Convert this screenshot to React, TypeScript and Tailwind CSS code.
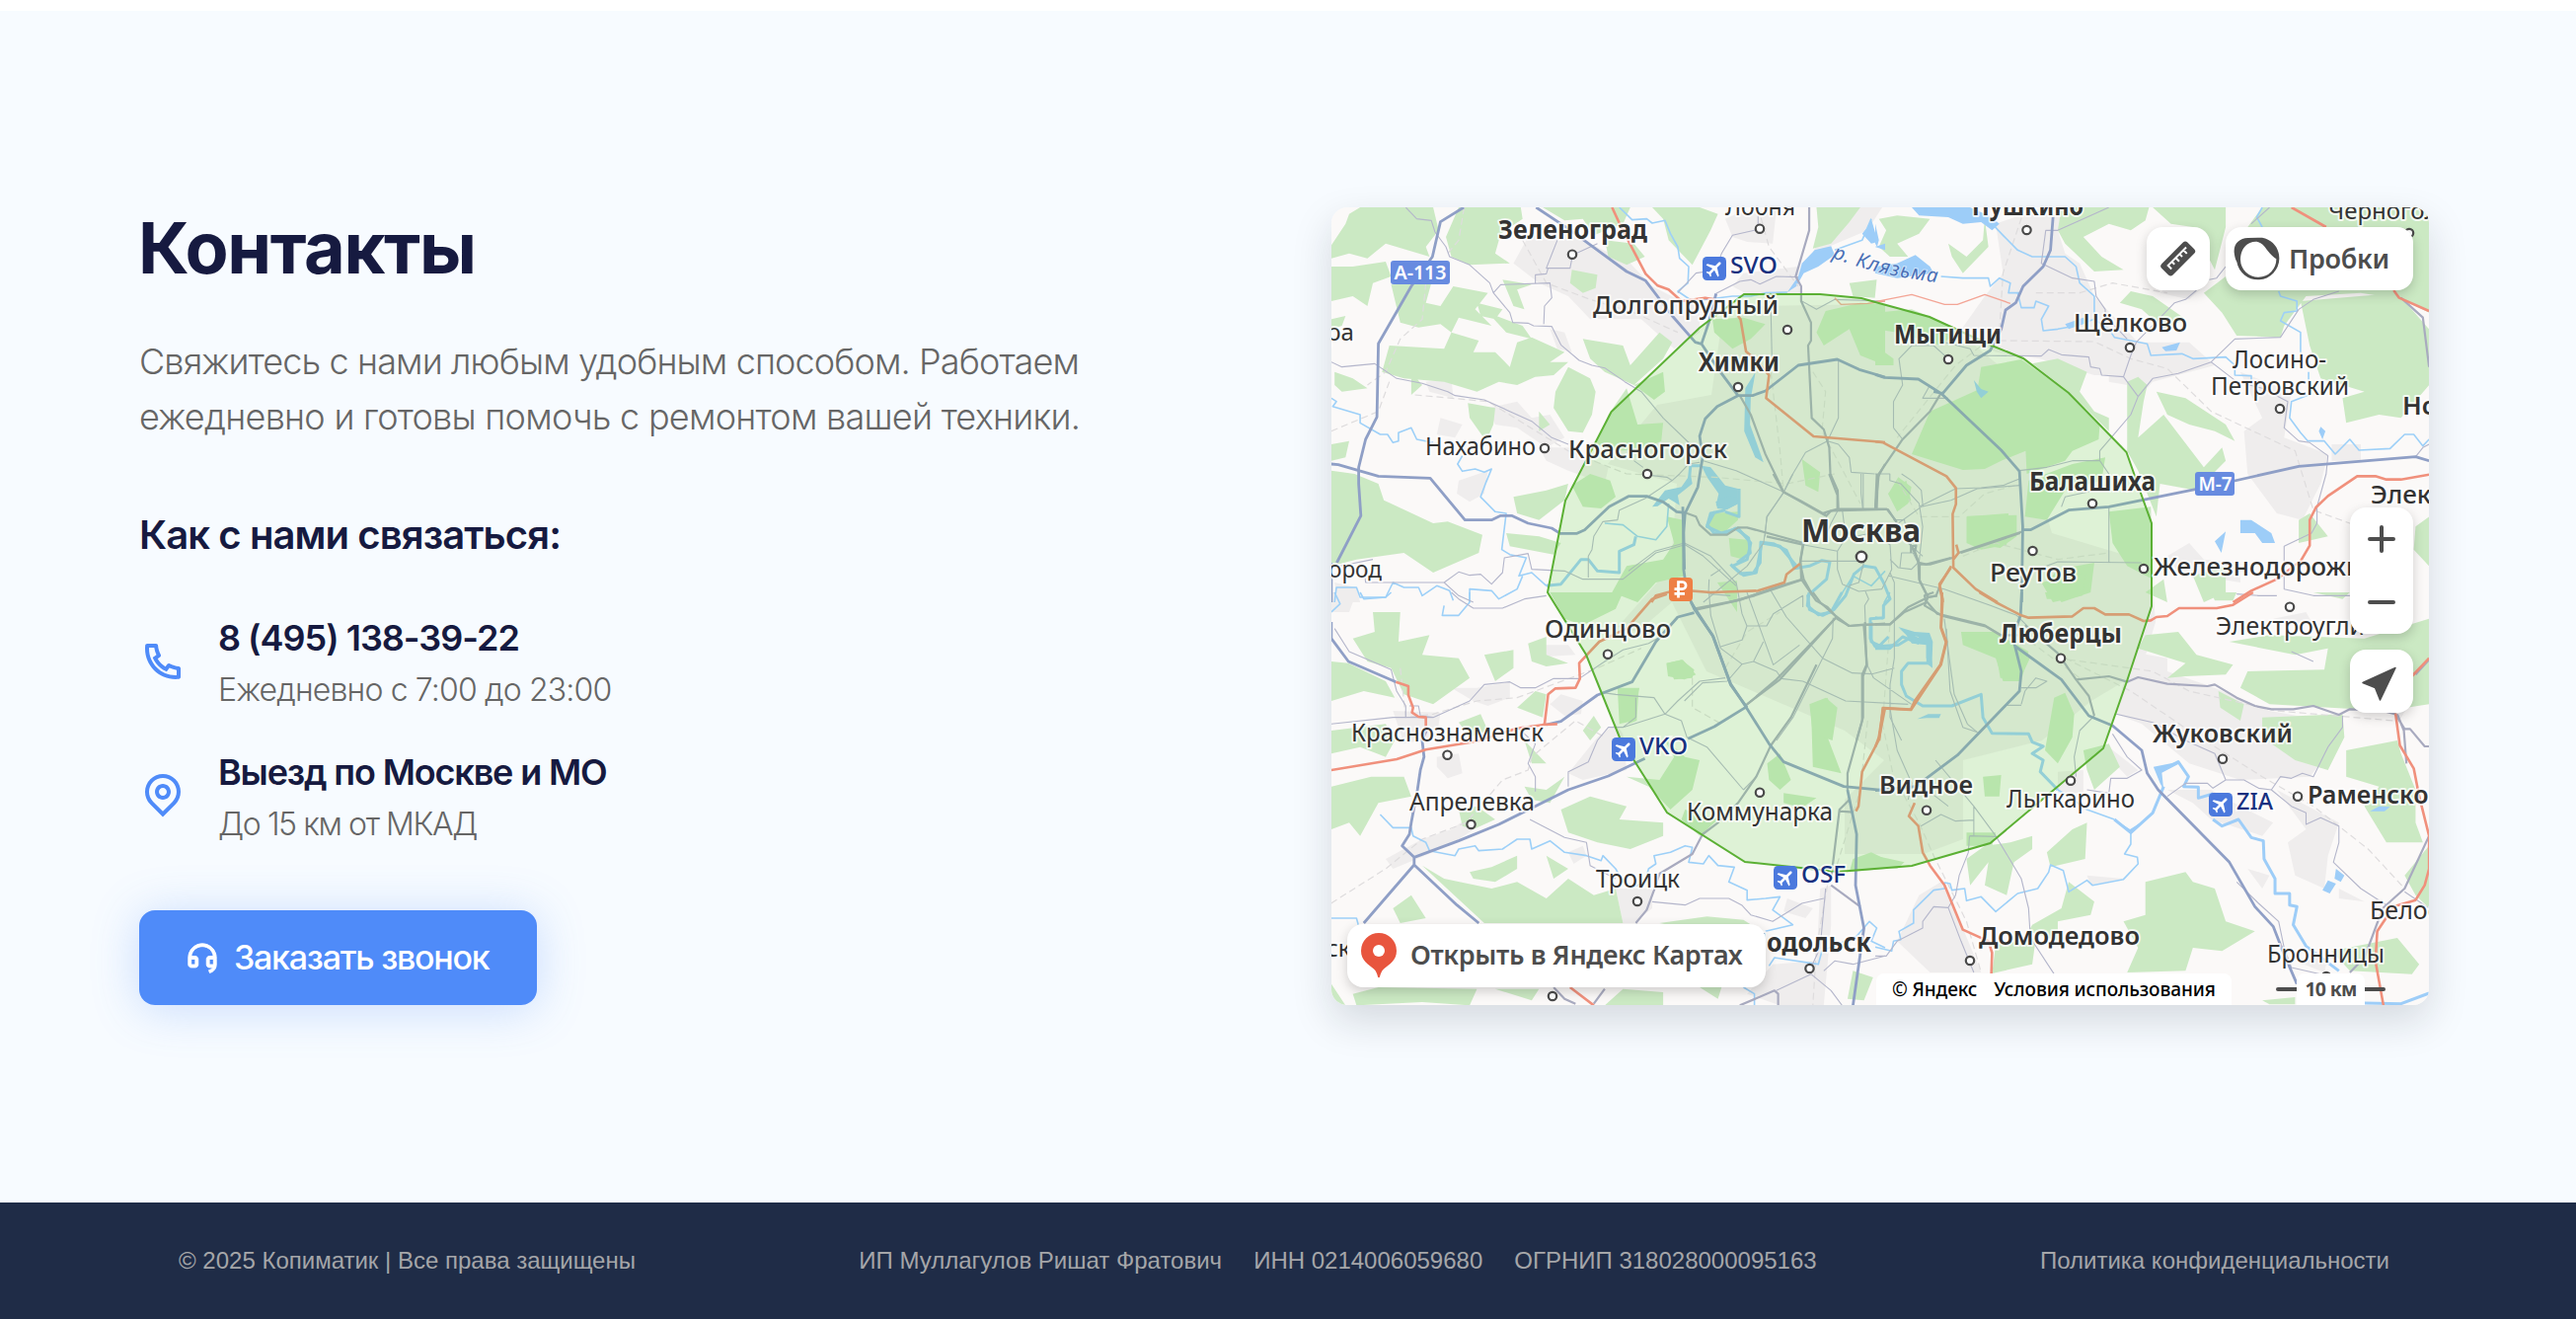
import type { ReactNode } from 'react';
import { RiCustomerServiceLine, RiMapPinLine, RiPhoneLine } from 'react-icons/ri';

type LayerName =
  | 'urban'
  | 'forest'
  | 'water'
  | 'rail'
  | 'stream'
  | 'river'
  | 'minor'
  | 'medium'
  | 'redThin'
  | 'blue'
  | 'red';

type Tile = { transform: string } & Partial<Record<LayerName, string[]>>;

const LAYERS: { name: LayerName; fill: string; stroke: string; width: number; dash?: string }[] = [
  { name: 'urban', fill: '#efeded', stroke: 'none', width: 0 },
  { name: 'forest', fill: '#cbe9c3', stroke: 'none', width: 0 },
  { name: 'water', fill: '#9dcdf8', stroke: 'none', width: 0 },
  { name: 'rail', fill: 'none', stroke: '#dedcdd', width: 1.2, dash: '7 4' },
  { name: 'stream', fill: 'none', stroke: '#9dd0f8', width: 1.6 },
  { name: 'river', fill: 'none', stroke: '#9dcdf8', width: 3 },
  { name: 'minor', fill: 'none', stroke: '#b4b6cb', width: 1.1 },
  { name: 'medium', fill: 'none', stroke: '#a8aabf', width: 2.2 },
  { name: 'redThin', fill: 'none', stroke: '#f3a596', width: 1.4 },
  { name: 'blue', fill: 'none', stroke: '#8f9fc6', width: 2.8 },
  { name: 'red', fill: 'none', stroke: '#f0907c', width: 2.6 },
];

const TILES: Tile[] = [
  {
    transform: 'translate(-19 -20) scale(0.3699 0.33333)',
    urban: [
      '590,150 680,130 760,170 870,230 930,300 1010,345 1060,360 1060,440 990,490 900,400 760,400 700,330 620,290 550,230',
      '1130,95 1160,80 1270,70 1260,170 1190,165 1150,150',
      '1150,300 1180,260 1330,240 1335,320 1200,330',
      '310,590 380,580 385,640 320,620',
      '350,700 410,720 390,760 340,750',
      '480,670 560,650 600,700 650,690 690,760 640,790 560,730 500,720',
      '400,890 480,860 470,930 430,955 395,930',
      '1370,200 1520,130 1560,60 1490,60 1400,120',
      '620,790 700,790 810,850 800,900 700,860 640,830',
      '60,1200 120,1215 130,1260 70,1260',
      '650,430 690,440 710,500 670,490',
    ],
    forest: [
      '130,60 330,60 345,130 310,180 320,210 200,170 150,215 100,200 51,215 51,175 90,110 100,80',
      '400,60 570,60 575,95 515,140 500,200 540,230 430,235 380,210 365,150',
      '51,240 110,240 200,225 215,270 165,290 150,360 110,330 51,345',
      '215,295 325,290 310,350 350,360 385,300 480,320 445,370 490,420 400,395 380,440 350,415 290,425 240,410',
      '210,480 360,490 380,440 455,465 440,500 500,500 540,545 560,470 600,455 690,500 650,530 620,570 560,600 510,590 450,620 360,590 250,580 190,560',
      '630,60 870,60 850,110 770,145 740,95 690,100',
      '800,160 880,170 910,210 860,235 810,210',
      '710,250 780,265 775,305 740,320 705,290',
      '700,545 760,580 775,620 765,690 740,745 700,740 660,670 665,620',
      '425,655 500,670 495,720 475,770 430,700',
      '51,860 115,870 180,900 195,950 330,1020 370,1015 465,1055 455,1110 330,1170 250,1110 120,1130 51,1150',
      '550,940 640,920 700,900 690,950 620,1010 560,990',
      '530,1050 620,1060 680,1080 660,1115 540,1090',
      '740,460 850,480 870,540 950,440 985,470 960,520 880,600 800,560 760,520',
      '880,600 960,560 965,620 935,645',
      '810,690 860,610 890,720 960,715 955,770 900,795 830,800 775,780',
      '710,905 760,870 815,890 830,940 790,975 740,970',
      '930,60 1060,60 1110,80 1090,130 1040,235 975,160 960,95',
      '1380,60 1500,60 1470,105 1420,170 1370,185 1385,120',
      '1095,400 1180,395 1240,415 1200,460 1150,490 1100,440',
      '1405,375 1500,350 1568,355 1568,540 1500,510 1470,430 1400,480 1380,440',
      '1090,990 1165,985 1165,1010 1130,1045 1085,1040',
      '1140,1065 1190,1070 1200,1100 1180,1130 1145,1120',
      '1340,825 1390,865 1385,925 1350,905',
      '860,1150 960,1130 990,1080 970,1000 1015,1010 1020,1180 940,1200 890,1260 820,1230',
      '1470,290 1545,280 1540,335 1480,330',
      '60,560 110,580 150,610 80,620 60,600',
      '480,380 575,420 600,460 530,440',
      '520,280 600,295 560,310 580,370 550,360',
      '51,780 100,770 90,820 51,830',
      '270,560 300,600 270,630',
      '620,680 650,720 620,740',
      '450,350 520,370 500,400 460,390',
      '600,530 700,530 660,570 610,575',
      '51,400 90,390 80,420 51,430',
    ],
    water: [
      '1340,230 1375,190 1420,178 1430,205 1385,240 1345,260 1325,300 1300,318 1330,270',
      '1505,140 1520,120 1530,95 1548,165 1530,170',
      '1185,610 1213,560 1200,640 1198,720 1235,835 1212,820 1182,740',
      '1065,845 1090,850 1130,905 1165,915 1165,960 1130,980 1105,965 1112,930 1080,880',
      '930,970 965,920 1010,910 1035,870 1040,900 1000,935 1005,965 975,945 945,968',
      '1540,180 1568,170 1568,190',
    ],
    rail: [
      '575,160 640,290 760,340 880,380 1000,440',
      '415,60 400,160 370,200',
      '310,290 300,400 240,460 200,560 150,600',
      '1220,60 1250,180 1330,300',
      '51,740 180,680 210,590',
      '280,630 480,650 700,800 860,870 1100,880 1300,900 1430,870',
      '1255,560 1280,800 1290,925',
      '1370,560 1405,620 1395,740 1500,960',
    ],
    stream: [
      '840,60 875,98 915,95 930,108 965,100 980,140 1000,180 1005,215 1030,240 1028,290 1000,315 1040,345',
      '51,640 65,650 55,665 130,690 130,715 185,750 205,750 220,775 235,770 235,745 270,730 285,765 330,775',
      '410,815 397,840 410,862 445,855 470,865 490,855 475,895 460,940 500,985 530,990 518,1100 540,1115 585,1125 565,1180 600,1170 640,1210',
      '60,1260 65,1215 120,1215 130,1245 200,1245 220,1200 250,1215 290,1215 300,1240 340,1210 375,1225 385,1255',
      '430,1260 430,1220 490,1225 510,1250 560,1220 575,1180',
      '800,1020 850,1025 890,1060 940,1070 970,1030 975,960',
      '1430,190 1505,160 1530,95',
      '1300,318 1240,320 1200,330 1150,330 1040,345',
      '1568,1165 1530,1210 1480,1180 1440,1250',
    ],
    river: [
      '640,1210 680,1205 735,1130 755,1130 780,1165 840,1170 840,1105 880,1085 885,1060',
      '1130,980 1090,990 1080,1030 1120,1050 1165,1035 1200,1080 1190,1130 1150,1150 1180,1178 1215,1170 1230,1080 1280,1090 1325,1150',
      '1168,915 1168,1000 1130,985',
      '1065,845 1035,845 1030,900',
    ],
    minor: [
      '255,60 285,95 325,100 335,135 365,180 375,210 430,235 485,290 495,320 540,380 548,410 590,412 605,420 655,422 680,478 730,525 765,540 800,548 855,590 900,620 960,700 1035,780',
      '51,530 80,545 170,535 230,580 300,595 370,620 390,632 470,645 540,680 600,710 655,760 700,780',
      '495,320 515,295 650,290 655,335 635,360 633,415',
      '670,160 640,245 705,245 712,205 780,170',
      '610,290 610,265 640,262 645,245',
      '1220,60 1220,110 1210,130 1150,145 1120,200 1105,250 1050,260 1000,320',
      '1105,322 1170,285 1200,280 1225,293 1270,270 1330,272',
      '140,1150 145,1200 360,1200 400,1168 430,1178 460,1175 490,1205 520,1170 525,1125 590,1112 600,1160 690,1165 740,1190 850,1190 940,1110 1020,1085 1070,1120 1160,1210',
      '51,1155 165,1130',
      '360,1200 400,1240 440,1260',
      '1070,830 1160,860 1290,925',
      '880,830 905,850',
      '930,875 970,880 985,890 1005,870 1030,840 1060,835',
      '985,890 910,945 840,980 835,1010 795,1015 770,1060 765,1100 755,1120 755,1185',
      '1440,520 1440,700 1410,770 1350,805 1310,880 1290,925',
      '1255,370 1258,520 1250,570',
      '1440,978 1420,1020 1400,1070',
      '1475,865 1540,870',
      '1475,865 1470,820 1440,780 1410,770',
      '1508,870 1508,978',
      '1340,345 1380,370 1430,340 1568,345',
      '1290,925 1245,1000 1235,1080 1190,1150 1070,1260',
    ],
    medium: [
      '1360,60 1360,130 1323,270 1338,300 1338,345 1365,410 1365,465 1357,480 1367,700 1400,735 1415,790 1418,870 1438,920 1440,978',
      '1170,632 1200,690 1240,810 1290,925 1405,997',
      '1405,1000 1420,982 1568,978',
      '1020,988 1050,1000 1060,1025 1090,1055 1135,1055 1165,1033 1190,1033 1345,1080',
      '1568,840 1548,880 1545,978',
      '1345,1080 1335,1140 1345,1190 1370,1240',
      '1345,1190 1210,1240 1140,1260',
    ],
    redThin: ['1430,335 1447,355 1520,352 1568,345'],
    blue: [
      '414,60 350,104 328,210 270,300 180,474 176,697 145,765 126,850 126,900 132,997 66,1140',
      '51,840 70,842 180,877 322,883 417,1010 490,1010 515,997 545,997 590,1020 655,1035 678,1051 724,1051 745,1040 812,970 865,938 915,938 960,955 997,985 1020,988',
      '612,60 700,125 860,255 912,283 985,390 1048,470 1065,475 1110,550 1165,632',
      '1165,632 1108,665 1075,703 1060,755 1068,820 1055,910 1020,990 1016,1050 1016,1160 1020,1190',
      '1165,632 1205,632 1240,618 1330,540 1437,522 1497,553 1568,576',
      '1065,475 1085,410 1105,322',
      '51,1140 51,1260',
    ],
    red: [
      '820,60 845,120 912,262 945,298 975,310 1010,345 1075,335 1100,340',
      '1165,390 1172,400 1187,498 1210,520 1250,570 1242,640 1372,756 1568,774',
      '928,1260 940,1240 1000,1222 1090,1230 1220,1225 1292,1200 1298,1175 1335,1143',
    ],
  },
  {
    transform: 'translate(551 -20) scale(0.3699 0.33333)',
    urban: [
      '330,110 460,60 640,60 500,130 520,200 560,230 600,330 720,470 860,470 930,540 760,590 720,640 680,570 600,570 450,520 330,500 230,440 300,330 350,260',
      '1000,560 1140,620 1120,760 1240,810 1220,900 1170,1010 1100,990 1020,870 1010,740 1060,700',
      '860,230 900,300 860,340 780,320',
      '1380,60 1450,110 1500,140 1460,170',
      '640,520 700,560 690,600 640,590',
      '800,1120 860,1080 900,1130 1000,1140 1000,1200 830,1170',
      '1250,780 1330,780 1330,830 1250,830',
    ],
    forest: [
      '510,60 750,60 740,100 700,130 640,110 570,150 620,210 680,250 600,255 520,170 500,130',
      '10,95 60,85 150,95 120,140 60,170 90,210 40,210 10,180 30,130',
      '200,170 250,210 295,160 300,95 310,180 240,260 210,210',
      '760,60 960,60 960,120 930,250 870,120 810,110',
      '1060,60 1517,60 1517,380 1440,340 1330,320 1180,330 1120,420 1110,455 990,450 950,380 900,320 960,270 1000,150',
      '1165,345 1430,320 1517,430 1517,600 1440,700 1380,690 1290,715 1280,640 1340,620 1220,580 1190,480',
      '290,545 400,522 530,625 615,720 612,765 540,800 520,830 415,870 412,800 345,830 300,855 240,858 100,810 150,680 280,615',
      '430,535 500,520 580,560 560,620 600,680 640,700 640,740 530,620',
      '0,380 100,370 230,430 180,480 60,440 0,430',
      '0,480 50,520 50,540 0,540',
      '690,590 720,575 745,600 735,650 720,760 790,690 900,850 950,790 960,830 880,920 780,900 770,1000 720,860 690,800',
      '770,620 850,640 960,720 985,770 930,740 860,720 800,690',
      '640,985 755,970 760,1190 690,1150 650,1080',
      '250,1000 365,990 360,1085 290,1100 250,1080',
      '410,1000 420,890 540,840 630,820 620,890 520,920 470,1010',
      '500,1160 600,1140 590,1230 510,1260 470,1200',
      '35,930 85,890 98,950 60,985',
      '1480,1030 1517,1000 1517,1150 1475,1100',
      '1160,1010 1190,990 1240,1060 1160,1080',
      '670,350 700,315 760,330 850,400 790,430 730,370',
      '870,1180 960,1150 960,1230 900,1260',
      '740,1230 790,1190 800,1260',
    ],
    water: [
      '100,60 260,60 320,90 340,110 320,130 290,105 240,110 200,90 120,85',
      '0,240 60,230 110,205 150,240 160,260 60,275 0,260',
      '785,485 835,470 825,495 795,497',
      '1000,1010 1030,1010 1085,1050 1095,1080 1060,1080 1040,1050 1000,1050',
      '930,1075 960,1045 948,1110',
      '1215,740 1220,727 1233,740 1225,765',
      '270,585 290,612 310,620 290,640 278,620',
      '0,110 10,160 5,180 0,170',
      '520,415 570,395 580,410 530,430',
    ],
    rail: [
      '410,60 350,260 340,440 220,540 60,760',
      '340,465 600,468 700,520 800,550 920,680 1150,800 1200,980 1400,1060',
      '440,320 560,320 650,290 800,320',
      '240,1120 330,1080 500,1130 640,1110',
      '60,890 120,1000 230,1000 300,930 400,900',
    ],
    stream: [
      '320,110 350,145 390,190 430,210 520,210 550,240 560,290 600,330 600,400 550,420 500,430 460,435 455,400 475,360 440,345 435,365 400,365 390,320 370,320',
      '180,270 240,275 310,275 315,300 340,275 370,290 365,320 400,320',
      '600,400 640,430 655,455 745,475 755,510 840,505 870,520 960,515 985,540 985,570 1030,572 1030,600',
      '1165,500 1165,440 1110,405 1120,380 1155,375 1155,345 1110,330 1105,315',
      '1187,560 1187,630 1140,650 1135,700 1165,745 1185,770 1230,770 1260,810 1300,765 1325,798 1410,793 1450,750 1475,750 1500,785 1517,765',
      '1060,60 1045,90 1060,120',
    ],
    minor: [
      '270,510 455,512 475,492 510,508 585,515 590,545 615,550 620,570 680,575 700,510 715,470',
      '680,575 720,635 700,690 650,755 615,800 615,830',
      '720,635 760,580 830,565 920,530 985,460 1110,455 1160,370 1200,340 1270,315',
      '920,530 990,590 1060,610 1130,650 1120,730 1160,770 1190,775 1240,815 1235,870 1210,970 1210,1020 1195,1050 1120,1090 1120,1220 1200,1240 1300,1240',
      '640,60 580,90 500,130 467,130 455,230 540,275 600,285 605,330 630,370 630,390 690,460',
      '880,312 850,340 820,350 750,430 715,470',
      '420,1170 500,1137 730,1140',
      '50,730 50,650 75,600 65,520 100,480 160,480 200,520',
      '50,730 75,765',
      '640,1140 640,970',
      '120,970 220,915 290,912 350,905 395,885',
      '395,860 470,850 540,830 615,830 640,870 640,890',
      '510,970 520,940 600,920',
      '1480,818 1500,790 1517,780',
      '915,280 935,275 960,240',
      '1080,60 1040,100 1030,110',
      '200,640 130,640 150,600',
      '0,870 40,870 40,890 70,900 120,960 130,1030 120,1140',
      '50,1010 80,1010 90,1080 130,1120',
      '270,510 260,490 190,470',
    ],
    medium: [
      '180,625 150,680 75,765 10,870 0,975',
      '228,1110 404,1045',
      '120,1145 150,1145 212,1125',
      '0,978 35,978 60,1020',
      '100,1090 110,1110 118,1140 120,1190 145,1245 170,1240',
      '98,1110 98,1090 112,1088 108,1112',
      '1440,335 1500,395 1517,545',
    ],
    redThin: ['0,347 100,325 190,355 225,355 300,325 370,352'],
    blue: [
      '487,90 480,190 460,240 405,300 385,350 357,372 345,430 315,495 250,540 185,625',
      '160,620 185,625',
      '0,568 25,577 118,582 180,625 345,798 395,862 404,1030 401,1260',
      '404,1040 425,1040 530,980 640,970 900,912 1160,847 1480,818 1517,830',
    ],
    red: [
      '1140,60 1235,120',
      '1420,312 1435,335 1517,375',
      '1517,872 1440,887 1400,887 1370,877 1320,877 1240,937 1207,972 1190,1010 1190,1088 1165,1135 1100,1190 1030,1225 980,1260',
      '0,772 22,775 195,877 221,913 221,962 212,992 214,1155 275,1220 335,1260',
      '222,1085 228,1110 214,1130',
      '208,1150 176,1210 185,1260',
    ],
  },
  {
    transform: 'translate(-19 390) scale(0.3699 0.33333)',
    urban: [
      '220,360 350,365 340,440 250,460',
      '300,750 380,720 430,680 470,700 400,750 330,790 220,840 200,810',
      '780,440 830,400 850,430 860,540 740,570 700,550',
      '380,290 450,290 540,270 540,320 480,345 440,330',
      '680,310 740,330 735,370 690,375 650,340',
      '630,160 700,160 720,190 640,195',
      '830,900 930,900 930,960 880,1005 850,1005',
      '1390,900 1420,890 1420,1010 1400,1255 1280,1255 1190,1220 1260,1130 1380,1120',
      '340,500 400,490 410,550 370,565 340,530',
      '1300,930 1370,960 1350,990 1290,970',
      '700,790 740,770 750,800 715,825',
      '51,0 120,0 100,60 51,60',
    ],
    forest: [
      '165,60 240,60 235,150 320,130 300,190 400,200 430,260 330,340 250,310 215,230 150,210 110,140 170,120',
      '51,210 98,215 200,270 225,320 140,300 51,330',
      '51,420 200,400 225,450 200,500 130,470 51,490',
      '51,590 160,560 250,560 270,620 180,640 130,740 100,700 51,720',
      '400,395 460,370 480,420 430,440',
      '470,190 550,175 550,230 500,270',
      '590,155 640,135 640,190 700,215 640,225 600,210',
      '610,300 640,310 630,380 560,350',
      '770,375 790,410 760,450 740,420',
      '680,660 760,620 860,650 840,690 960,700 960,740 870,780 780,760 700,730',
      '430,850 490,835 560,800 560,840 500,880 440,870',
      '490,900 560,880 640,930 700,870 770,920 830,900 850,1005 470,1005 300,830 360,870',
      '220,960 270,920 310,990 240,1005',
      '950,1005 1080,985 1180,995 1230,1030 1200,1060',
      '120,1255 110,1220 180,1200 450,1205 430,1255 300,1245',
      '500,1205 620,1205 600,1240',
      '800,1255 850,1205 960,1215 960,1255',
      '1060,1200 1120,1200 1110,1235',
      '860,560 950,570 990,500 960,440 1020,500 1060,510 1040,600 980,660 920,590',
      '1365,340 1410,320 1425,360 1400,410 1448,550 1370,530',
      '970,215 1010,205 1045,235 1040,260 990,265',
      '835,290 895,290 880,390 840,400',
      '1245,520 1280,490 1310,570 1280,600 1250,570',
      '1290,610 1380,625 1340,655 1290,640',
      '1480,810 1530,790 1568,810 1568,840 1470,850',
      '650,0 850,0 830,50 740,100 690,80',
      '1480,1150 1535,1170 1510,1240 1465,1235',
      '51,1190 90,1255 51,1255',
      '400,660 450,650 500,690 440,720 410,710',
      '1020,660 1110,690 1060,740 1010,690',
      '580,450 640,520 600,520',
      '580,590 640,600 690,560 650,640 600,630',
      '640,800 700,840 660,870',
    ],
    rail: [
      '240,230 255,380 330,370 450,330 560,320 780,230 900,170',
      '0,980 200,840 300,750 420,700 520,570 590,540 600,500 720,390 800,440',
      '1410,890 1380,1080 1370,1255',
      '1040,260 1040,350 1120,400',
      '1520,390 1500,600 1430,850',
      '1130,230 1190,120 1280,60',
    ],
    stream: [
      '185,675 220,715 270,715 275,740 310,760 320,785 390,800 400,780 445,770 455,785 520,780 560,750 595,750 600,780 650,755 690,790 750,800 790,815 795,800 830,840 850,880',
      '870,900 910,880 920,840 940,825 935,800 980,790 1020,770 1040,775 1030,820 1070,825 1085,800 1110,830 1155,835 1140,880 1190,905 1190,935 1240,930 1280,925 1260,965 1315,1010 1240,1030',
      '1250,1135 1265,1110 1385,1130 1395,1090 1490,1045 1525,1000 1545,1020 1530,1060 1568,1080',
      '51,990 120,990 125,1010',
      '51,60 75,35 60,0',
      '360,40 355,70 400,70 430,30 430,0',
      '130,0 140,20 200,15 215,0',
      '1180,1200 1210,1220 1210,1255',
    ],
    river: [
      '1360,0 1355,40 1385,68 1420,60 1450,0',
      '1530,90 1530,150 1568,170',
    ],
    minor: [
      '60,110 100,180 215,235 230,300 255,345 255,380',
      '51,400 220,380 330,380 430,330 470,280 540,272 570,290 610,290 660,262 730,262 800,210 850,175 920,155 960,130',
      '265,345 290,345 295,375 330,380',
      '380,0 400,20 440,48 520,48 580,20 640,10',
      '795,305 830,310 935,320 965,370 1010,390 1025,440 1080,470 1180,600',
      '885,320 885,380 850,410 810,410 780,450 755,515 700,545 700,590',
      '850,410 880,400 965,370 1000,330 1060,270 1130,260',
      '560,410 610,460 590,520 610,560 610,605',
      '595,690 690,745 750,760 760,830 830,870',
      '930,940 1020,950 1060,930 1140,930 1175,950 1200,980 1260,1000 1340,945 1400,930',
      '1405,900 1390,1080 1365,1140',
      '1270,1210 1365,1160 1420,1210 1450,1255',
      '1400,1150 1430,1120 1480,1130 1568,1105',
      '1180,600 1215,560',
    ],
    medium: [
      '885,1005 915,965 935,905 950,855 1040,795 1068,735 1110,700 1165,640 1215,560 1255,465',
      '1255,465 1310,380 1380,220',
      '1185,345 1270,265 1435,75',
      '1435,80 1470,102 1568,95',
      '1513,90 1517,220 1505,250 1505,390 1465,550 1465,600',
      '1470,630 1443,660 1420,870',
      '1443,665 1480,668',
      '1420,890 1500,955',
      '1170,1255 1265,1210 1275,1220 1275,1255',
      '660,1200 690,1235 720,1250',
      '770,1250 800,1205',
      '1045,50 1160,25 1230,0',
      '1370,0 1390,30 1435,75',
    ],
    blue: [
      '51,90 51,140 98,210 228,272',
      '315,410 300,450 305,500 295,540 287,600 270,700 265,735 245,770 278,805 278,828 140,1005',
      '278,805 400,755 510,705 700,600 810,558 910,505',
      '1028,445 1100,408 1185,350',
      '278,828 395,950 455,1005',
      '640,402 680,392 780,312 875,272 940,150 1000,75 1045,62',
      '1025,0 1045,50 1095,130 1145,278 1185,345 1250,460 1290,515 1455,590 1568,602',
      '1465,600 1490,735 1487,890 1510,1020 1480,1255',
    ],
    red: [
      '228,272 262,285 262,312 275,350 272,365 290,378 310,380 310,410',
      '51,540 230,507 310,478 450,452 560,413 635,402 645,310 665,292 720,290 732,262 730,215 785,150 860,110 930,20 970,5',
      '630,402 670,400',
      '705,1200 770,1255',
      '1568,350 1550,450 1505,545 1500,600 1495,650 1488,665',
    ],
  },
  {
    transform: 'translate(551 390) scale(0.3699 0.33333)',
    urban: [
      '700,180 800,200 800,240 930,290 1080,360 1280,400 1280,440 1190,560 1000,570 860,520 730,400 660,370',
      '1100,600 1270,700 1240,800 1230,900 1150,860 1130,760 1180,720',
      '120,920 180,880 240,1020 290,1155 150,1155 60,1060',
      '800,600 920,600 1000,650 1090,700 1060,740 920,690 870,640',
      '1270,900 1340,940 1270,930',
      '500,545 570,540 570,610 500,610',
      '640,470 720,540 690,560 640,500',
      '580,860 680,870 590,890',
      '1470,130 1517,90 1517,240 1430,400',
      '1150,1120 1240,1110 1230,1155',
      '1090,80 1180,60 1200,100',
      '1020,840 1080,860 1060,900',
    ],
    forest: [
      '235,120 305,120 375,150 420,180 400,270 350,270 330,200 240,160',
      '740,130 830,120 880,190 980,220 960,250 850,255 800,260 850,215 720,170',
      '970,150 1080,130 1340,140 1517,80 1517,340 1400,360 1080,340 1000,290 1020,240 1230,235 1240,170 1150,190',
      '1060,380 1280,370 1285,440 1240,540 1150,510 1060,440',
      '1290,480 1430,450 1440,490 1480,600 1480,700 1500,760 1400,760 1340,650 1380,590 1290,560',
      '490,320 520,305 545,370 540,440 500,520 465,480',
      '540,720 580,700 575,810 480,835 470,790',
      '250,810 300,770 370,760 430,740 430,780 380,820 360,920 300,890 310,820 260,890',
      '430,1010 510,960 530,880 600,940 590,980 500,1000 500,1060 420,1030',
      '680,1000 740,980 740,880 850,850 870,880 930,900 960,1000 1040,1030 950,1090 870,1080 850,1150 690,1155 720,1080',
      '330,1070 440,1050 430,1130 320,1158',
      '1250,1090 1430,1050 1490,1130 1470,1160 1300,1150',
      '570,480 640,460 670,530 600,600 580,540',
      '295,560 345,555 340,620 300,620',
      '465,0 550,0 530,20 470,20',
      '920,0 990,0 980,25 930,25',
      '940,300 1010,340 1000,390 945,350',
      '1060,1240 1150,1230 1150,1252 1080,1252',
      '0,800 80,820 60,840 0,835',
      '1450,860 1517,770 1517,960 1480,920',
      '250,730 330,730 320,770 250,770',
      '1200,0 1300,0 1280,20',
    ],
    water: [
      '65,108 100,130 150,150 157,230 140,215 140,160 100,155 85,130',
      '762,530 830,515 830,522 785,548 790,600 780,580',
      '1262,840 1285,860 1275,880 1258,870',
      '1225,905 1240,875 1262,885 1245,915',
      '1355,665 1380,650 1410,652 1395,665',
      '115,385 145,370 180,370 175,382 140,382',
      '655,690 698,720 740,690 700,735',
    ],
    rail: [
      '40,100 20,400 50,560 120,700 160,800 250,1000 290,1155',
      '520,200 700,300 860,420 1060,560 1200,650 1350,780 1450,900',
      '500,200 600,215 760,240 860,300 1100,360 1420,390',
      '400,130 560,260',
    ],
    stream: [
      '700,730 700,765 683,795 718,805 720,825 680,872 595,890 580,875 530,910 515,845 480,828 475,850 445,900 390,915 330,970 290,925 250,937 245,900 210,905 205,885 190,882 190,900 160,905 105,965 105,1005 65,1030 70,1055 50,1060 45,1090 0,1078',
      '500,600 530,620 580,660 655,690',
      '0,75 20,80 25,30 40,0',
    ],
    river: [
      '0,170 40,170 75,135 120,155',
      '155,215 90,215 72,240 72,280 85,315 130,345 210,345 290,310 295,380 320,428 420,430 430,455 460,468 430,490 460,510 452,545 500,600',
      '655,690 700,730 760,670 790,590',
      '785,540 830,515 858,560 845,590 885,592 885,625 925,612',
      '925,690 950,710 995,690 1030,745 1063,755 1065,810 1095,870 1095,915 1135,915 1135,950 1155,955 1145,1010 1180,1075 1270,1150',
      '1340,1248 1440,1250 1517,1218',
    ],
    minor: [
      '660,370 760,395 850,450 930,490 960,570',
      '800,620 850,580 910,580 925,595 960,570 1010,570 1050,595 1085,600 1140,650 1180,670 1180,705 1220,685 1270,710 1270,760 1255,820 1330,900 1400,950',
      '1085,600 1110,560 1140,565 1170,550 1200,560 1240,470 1280,410 1280,375',
      '650,430 690,500 730,540 690,565 645,565 640,610 580,600',
      '40,350 60,480 100,580 90,630',
      '165,510 270,650 270,740 260,740',
      '110,580 165,620 200,650',
      '270,650 330,740 400,870 420,960 425,1050 490,1160',
      '258,740 330,742',
      '125,710 180,675 220,695 270,692',
      '600,375 560,420 545,500 550,560',
      '0,1105 30,1105 60,1060 130,1020 130,1000 160,955 200,958',
      '258,742 255,790 230,860 220,920 200,958 235,1060 270,1155',
      '195,110 205,300 240,410 280,425',
      '990,880 1050,945 1105,1000 1120,1080 1140,1140 1220,1160',
      '400,340 410,300 440,260 470,270 440,290 400,290',
      '360,343 400,343',
      '1140,180 1200,210',
      '990,5 1050,10 1100,10',
      '1517,960 1450,910',
    ],
    medium: [
      '135,20 170,65 300,100 345,130 390,130',
      '410,100 500,185 550,265 640,255 690,272 720,258 800,278 910,285 930,280 990,320 1040,345 1085,355 1145,355 1200,345 1270,372 1300,355 1390,360 1425,370 1450,415 1465,415 1505,468 1517,468',
      '550,265 585,315 600,375',
      '1430,370 1448,420 1455,520',
      '1517,740 1450,900 1390,960 1340,1110 1300,1155',
      '0,97 40,97 80,60 140,30 135,10 160,0',
      '1480,250 1517,205',
    ],
    blue: [
      '401,0 398,70 382,120 382,160 400,240 395,300 225,495 140,565 110,590 0,602',
      '385,165 510,265 585,375 650,405 730,480 745,550 775,600 970,820 1040,955 1090,1015 1120,1100 1155,1190',
    ],
    red: [
      '285,0 330,30 400,70 420,77 540,73 570,48 600,48 630,67 695,67 735,87 755,85 770,75 800,72 832,48 935,48 980,38 1035,0',
      '1517,200 1470,255',
      '1425,368 1437,465 1475,535 1490,620 1517,740 1517,840 1505,890 1480,935 1420,955 1375,1030 1370,1120 1392,1255',
      '183,0 180,105 195,150 180,220 98,357 22,352 10,440 0,470',
      '108,640 92,680 118,710 130,790 150,830 190,890 240,1025 310,1060 320,1095 318,1160',
    ],
  },
  {
    transform: 'translate(301 270) scale(0.33333)',
    forest: [
      '1030,128 1180,125 1180,190 1130,225 1095,220 1060,230 1030,200',
      '790,60 820,10 860,40 850,90 820,112',
      '270,330 330,325 330,420',
      '1255,330 1390,300 1380,370 1290,390',
      '115,575 165,565 205,610 170,625 120,615',
      '1010,480 1120,480 1180,540 1220,560 1190,625 1130,620 1120,560',
      '550,700 600,680 635,710 620,810 560,790',
      '0,690 30,670 25,750 0,760',
    ],
    river: [
      '310,275 340,303 380,300 400,270 402,208 440,212 480,232 505,287 550,280 588,263 612,268 602,320 545,370 550,412 590,430 625,412 660,370 685,305 715,280 750,285 775,330 795,380 775,400 775,437 735,440 735,500 750,525 820,520 870,490',
      '262,115 240,155 260,180 300,180 325,165 365,195 370,240 330,270',
      '760,525 790,495',
    ],
    water: ['820,465 870,480 915,483 925,510 922,585 905,560 905,520 880,495 850,490', '265,85 300,68 330,70 335,90 300,108 270,105'],
    minor: [
      '0,295 80,235 170,210 250,250 328,333 345,425 360,462 420,462 440,425 530,370 530,405',
      '245,365 250,430 280,530 345,578 380,570 410,510',
      '247,365 310,370',
      '430,350 480,435 590,560 680,605 740,608 808,590',
      '280,525 345,505 360,462',
      '345,578 300,630 225,635 170,690',
      '530,630 660,690 850,700',
      '590,560 540,660 500,740 450,810',
      '530,630 465,622 450,600 380,570',
      '622,437 620,500 590,560',
      '707,0 707,60 712,107',
      '795,300 808,330 808,560 795,640 795,740 830,810',
      '790,310 960,350 1100,400 1180,430 1220,470',
      '745,620 860,700',
      '725,580 745,620',
      '960,440 975,560 990,670 1030,760 1060,785',
      '895,100 890,50 860,20 830,0',
      '820,150 890,100 980,80 1060,45 1190,35',
      '415,190 420,130 470,60 500,0',
      '250,310 280,290',
      '530,215 635,235',
      '520,265 700,265',
      '665,185 655,150 650,110',
      '635,235 660,195 740,180 795,215 800,290 770,350 700,357 650,335 635,290 635,235',
      '795,260 820,285 860,290 880,270 865,240 830,240 825,285',
      '720,357 730,380 718,400 720,450',
      '360,360 440,580 520,520',
      '245,320 243,365',
      '670,340 700,330 715,270',
    ],
    medium: [
      '590,120 605,115 635,107 785,107 815,145',
      '850,200 875,250 885,275 885,325 910,375 850,405 795,457 715,458 670,462 630,432 605,405 570,385 525,320 523,260 530,215',
      '530,215 420,190',
      '440,0 470,55 520,80 600,125',
      '610,0 635,65 635,107',
      '755,0 750,107',
      '1190,180 1010,240',
      '980,255 905,275 885,270',
      '715,458 725,580 713,615 713,740 693,810',
      '630,437 460,625 360,700',
      '205,413 340,383 430,350 530,320',
      '910,375 900,400 955,432 1085,463 1130,490',
      '910,375 935,370 945,345',
    ],
    blue: ['165,100 170,290', '190,390 258,495 310,640 360,710'],
    red: ['980,285 945,335 955,380 950,470 965,512 948,580 870,690 858,716 773,711 768,760 762,810'],
  },
];

/** Dense built-up area inside the ring road, in map coordinates. */
const CITY =
  '385,190 395,120 430,100 560,98 640,130 700,180 700,230 730,330 830,360 835,420 820,470 770,500 720,540 640,560 640,640 600,655 520,655 520,600 560,560 520,530 450,500 380,470 345,400 310,430 290,425 330,380 345,350 350,280 280,260 330,200';

const ZONE =
  '418,88 495,88 537,92 551,96 606,111 669,140 701,153 747,188 805.5,248 822,295 831,320 831,404 806,480 782,548 667.5,644 588,667 512.7,673 419,663 340,613 292,537 258,453 219,390 237,297 283.6,207 373,122';

type Label = { t: string; x: number; y: number; len?: number; w: 400 | 500 | 600 | 700; size?: number };

const LABELS: Label[] = [
  { t: 'Зеленоград', x: 169, y: 31.7, len: 151, w: 700 },
  { t: 'Лобня', x: 399, y: 7.7, len: 71, w: 400 },
  { t: 'Долгопрудный', x: 265, y: 107.7, len: 188, w: 500 },
  { t: 'ра', x: -5, y: 134.5, w: 400, size: 24 },
  { t: 'Химки', x: 372, y: 165.7, len: 82, w: 700 },
  { t: 'Нахабино', x: 95, y: 251, len: 112, w: 400, size: 25 },
  { t: 'Красногорск', x: 240, y: 254, len: 161, w: 500 },
  { t: 'Москва', x: 476, y: 338.5, len: 121, w: 700, size: 32.5 },
  { t: 'ород', x: -3, y: 375, len: 54, w: 400, size: 24 },
  { t: 'Пушкино', x: 649, y: 7.7, len: 113, w: 700 },
  { t: 'Черноголовка', x: 1010, y: 12, w: 400, size: 24 },
  { t: 'Мытищи', x: 570, y: 137.7, len: 109, w: 700 },
  { t: 'Щёлково', x: 752, y: 125.7, len: 115, w: 500 },
  { t: 'Лосино-', x: 913, y: 162.7, len: 95, w: 400, size: 25 },
  { t: 'Петровский', x: 891, y: 190, len: 140, w: 400, size: 25 },
  { t: 'Ногинск', x: 1085, y: 210, w: 600 },
  { t: 'Балашиха', x: 707, y: 286.7, len: 128, w: 700 },
  { t: 'Электросталь', x: 1053, y: 300, w: 500 },
  { t: 'Реутов', x: 667, y: 379, len: 88, w: 500 },
  { t: 'Железнодорожный', x: 833, y: 373, len: 248, w: 500 },
  { t: 'Одинцово', x: 216, y: 435.7, len: 128, w: 500 },
  { t: 'Краснознаменск', x: 20, y: 541, len: 195, w: 400, size: 25 },
  { t: 'Апрелевка', x: 79, y: 611, len: 127, w: 400, size: 25 },
  { t: 'Коммунарка', x: 360, y: 620.7, len: 148, w: 400, size: 25 },
  { t: 'Троицк', x: 268, y: 689, len: 85, w: 400, size: 25 },
  { t: 'ск', x: -5, y: 759, w: 400, size: 24 },
  { t: 'Подольск', x: 422, y: 754, len: 125, w: 700 },
  { t: 'Видное', x: 555, y: 594, len: 95, w: 600 },
  { t: 'Люберцы', x: 677, y: 440.7, len: 124, w: 700 },
  { t: 'Электроугли', x: 896, y: 432.7, len: 151, w: 400, size: 25 },
  { t: 'Лыткарино', x: 684, y: 608, len: 130, w: 400, size: 25 },
  { t: 'Жуковский', x: 832, y: 542, len: 142, w: 600 },
  { t: 'Раменское', x: 989, y: 604, len: 137, w: 600 },
  { t: 'Домодедово', x: 656, y: 746.7, len: 163, w: 600 },
  { t: 'Бронницы', x: 948, y: 765, len: 119, w: 400, size: 25 },
  { t: 'Белоозёрский', x: 1052, y: 721, w: 400, size: 25 },
];

const DOTS: [number, number][] = [
  [244, 47.7], [434, 21.7], [462, 124], [412, 182], [216, 244], [320, 270], [704.5, 23], [1092, 26],
  [625, 154], [809, 142], [961, 204], [771, 300], [710.5, 348], [823, 366], [280, 452.7], [117.5, 554.7],
  [141.5, 625], [434, 592.7], [310, 703], [484.5, 771], [224, 799], [603, 610.7], [739, 456.7],
  [971, 404.7], [749, 580.7], [903, 558.7], [979, 596.7], [647, 763], [1008, 779],
];

const AIRPORTS: { code: string; x: number; y: number; len: number }[] = [
  { code: 'SVO', x: 376, y: 50, len: 48 },
  { code: 'VKO', x: 284, y: 537, len: 49 },
  { code: 'OSF', x: 448, y: 667, len: 45 },
  { code: 'ZIA', x: 889, y: 593, len: 37 },
];

const toPath = (lines: string[]) => lines.map((line) => `M${line}`).join('');

function MapCanvas() {
  return (
    <svg viewBox="0 0 1112 808" className="block h-[808px] w-[1112px] font-['Noto_Sans',sans-serif]">
      <rect width="1112" height="808" fill="#fbf9f8" />
      {LAYERS.map((layer, index) => (
        <g
          key={layer.name}
          fill={layer.fill}
          stroke={layer.stroke}
          strokeWidth={layer.width}
          strokeDasharray={layer.dash}
          strokeLinejoin="round"
        >
          {index === 0 && <polygon points={CITY} />}
          {TILES.map((tile) => {
            const lines = tile[layer.name];
            return lines ? (
              <path key={tile.transform} d={toPath(lines)} transform={tile.transform} vectorEffect="non-scaling-stroke" />
            ) : null;
          })}
        </g>
      ))}
      <polygon points={ZONE} fill="#6fd64e" fillOpacity="0.2" stroke="#5bb034" strokeWidth="2" />

      <path id="river-name" d="M507,51 Q560,71 622,77" fill="none" />
      <text fontSize="20" fontStyle="italic" fill="#4a6fb5" stroke="#ffffff" strokeOpacity="0.5" strokeWidth="2" paintOrder="stroke">
        <textPath href="#river-name" textLength="110">
          р. Клязьма
        </textPath>
      </text>

      <g fill="#ffffff" stroke="#4a4a4a" strokeWidth="2.2">
        {DOTS.map(([x, y]) => (
          <circle key={`${x}-${y}`} cx={x} cy={y} r="4.2" />
        ))}
        <circle cx="537" cy="354" r="5.2" strokeWidth="2.4" />
      </g>

      <g fill="#333333" stroke="#ffffff" strokeOpacity="0.75" strokeWidth="4" strokeLinejoin="round" paintOrder="stroke">
        {LABELS.map((label) => (
          <text
            key={label.t}
            x={label.x}
            y={label.y}
            fontSize={label.size ?? 26}
            fontWeight={label.w}
            textLength={label.len}
            lengthAdjust="spacingAndGlyphs"
          >
            {label.t}
          </text>
        ))}
      </g>

      {AIRPORTS.map((a) => (
        <g key={a.code}>
          <rect x={a.x} y={a.y} width="24" height="24" rx="4.5" fill="#4b79dd" />
          <path
            transform={`translate(${a.x + 12} ${a.y + 12}) rotate(45) scale(0.88) translate(-11.5 -12)`}
            fill="#ffffff"
            d="M21 16v-2l-8-5V3.5c0-.83-.67-1.5-1.5-1.5S10 2.67 10 3.5V9l-8 5v2l8-2.5V19l-2 1.5V22l3.5-1 3.5 1v-1.5L13 19v-5.5l8 2.5z"
          />
          <text
            x={a.x + 28}
            y={a.y + 17.3}
            fontSize="23"
            fontWeight="500"
            textLength={a.len}
            lengthAdjust="spacingAndGlyphs"
            fill="#17307f"
            stroke="#ffffff"
            strokeOpacity="0.75"
            strokeWidth="3.5"
            paintOrder="stroke"
          >
            {a.code}
          </text>
        </g>
      ))}

      <g fontWeight="600" fontSize="19" fill="#ffffff">
        <rect x="60" y="54" width="60" height="24" rx="3" fill="#678be0" />
        <text x="63.5" y="72.5" textLength="53" lengthAdjust="spacingAndGlyphs">А-113</text>
        <rect x="875" y="268" width="40" height="24" rx="3" fill="#678be0" />
        <text x="878.5" y="286.5" textLength="34" lengthAdjust="spacingAndGlyphs">М-7</text>
      </g>
      <rect x="342" y="375" width="24" height="24" rx="4" fill="#ee8045" />
      <path
        d="M351.500,395.500 V379.500 H355.500 a3.600,3.600 0 0 1 0,7.200 H347.500 M347.500,391.300 H358"
        fill="none"
        stroke="#ffffff"
        strokeWidth="2.7"
      />
    </svg>
  );
}

function MapButton({ className, children }: { className: string; children: ReactNode }) {
  return (
    <div
      className={`flex items-center rounded-2xl bg-white text-[#4d4d4d] shadow-[0_4px_12px_rgba(0,0,0,0.18)] ${className}`}
    >
      {children}
    </div>
  );
}

function RulerIcon() {
  return (
    <svg viewBox="0 0 48 48" className="size-12">
      <g transform="translate(23.7 24) rotate(-45)">
        <rect x="-18.5" y="-8" width="37" height="16" rx="3.2" fill="#4d4d4d" />
        <path d="M-13,-2.2H14M-12,-2V2.8M-6.5,-2V1.6M-1,-2V2.8M4.5,-2V1.6M10,-2V2.8" stroke="#ffffff" strokeWidth="2" fill="none" />
      </g>
    </svg>
  );
}

function TrafficIcon() {
  return (
    <svg viewBox="275 55 147 141" className="h-[47px] w-[49px]">
      <path
        fill="#4d4d4d"
        fillRule="evenodd"
        d="M280,105C278,78 296,62 322,61L365,60C397,66 418,92 417,125A65,65 0 0 1 288,134C283,124 281,114 280,105ZM345,72C316,73 299,97 299,127A54,54 0 0 0 408,125C396,118 382,101 373,88C364,77 355,72 345,72Z"
      />
    </svg>
  );
}

function MapCard() {
  return (
    <div className="relative h-[808px] w-[1112px] shrink-0 rounded-[16px] shadow-[0_16px_40px_rgba(20,30,40,0.15)]">
      <div className="relative size-full overflow-hidden rounded-[16px]">
        <MapCanvas />

        <div className="absolute top-5 right-4 flex gap-4">
          <MapButton className="size-16 justify-center">
            <RulerIcon />
          </MapButton>
          <MapButton className="h-16 w-[190px] pl-[7px]">
            <TrafficIcon />
            <span className="ml-2 font-['Noto_Sans',sans-serif] text-[27px] font-semibold tracking-[-0.3px]">Пробки</span>
          </MapButton>
        </div>

        <div className="absolute top-[304px] right-4 flex flex-col gap-4">
          <MapButton className="h-32 w-16 flex-col">
            <svg viewBox="0 0 64 128" className="h-32 w-16" stroke="#4d4d4d" strokeWidth="4" strokeLinecap="round">
              <path d="M20,32H44M32,20V44M20,96H44" />
            </svg>
          </MapButton>
          <MapButton className="size-16">
            <svg viewBox="0 0 64 64" className="size-16">
              <path
                d="M46,18.5L13,33.5L25.5,38.5L30.5,51Z"
                fill="#4d4d4d"
                stroke="#4d4d4d"
                strokeWidth="1.5"
                strokeLinejoin="round"
              />
            </svg>
          </MapButton>
        </div>

        <MapButton className="absolute bottom-[18px] left-4 h-16 w-[424px] pl-3.5">
          <svg viewBox="0 0 36 46" className="h-[46px] w-9">
            <path
              d="M18,0A18,18 0 0 0 0,18C0,28 7.5,32 13,36.5C15.5,38.8 16.5,42 17,44.5Q18,46 19,44.5C19.500,42 20.5,38.8 23,36.5C28.5,32 36,28 36,18A18,18 0 0 0 18,0Z"
              fill="#e8553e"
            />
            <circle cx="18" cy="18" r="6" fill="#ffffff" />
          </svg>
          <span className="mb-0.5 ml-3.5 whitespace-nowrap font-['Noto_Sans',sans-serif] text-[27px] font-semibold tracking-[-0.35px]">
            Открыть в Яндекс Картах
          </span>
        </MapButton>

        <div className="absolute bottom-0 left-[552px] flex h-8 w-[360px] items-center gap-[17px] rounded-t-lg bg-white pl-4 font-['Noto_Sans',sans-serif] text-[19px] font-medium tracking-[-0.1px] whitespace-nowrap text-black">
          <span>© Яндекс</span>
          <span>Условия использования</span>
        </div>

        <div className="absolute right-11 bottom-0 flex h-8 items-center">
          <div className="h-1 w-[21px] rounded-l bg-[#4d4d4d]" />
          <div className="flex h-8 w-[69px] items-center justify-center rounded-t-lg bg-white font-['Noto_Sans',sans-serif] text-[19.500px] font-bold tracking-[-0.7px] whitespace-nowrap text-[#4d4d4d]">
            10 км
          </div>
          <div className="h-1 w-[21px] rounded-r bg-[#4d4d4d]" />
        </div>
      </div>
    </div>
  );
}

function ContactRow({ icon, children }: { icon: ReactNode; children: ReactNode }) {
  return (
    <div className="flex items-center gap-8">
      {icon}
      <div className="flex flex-col">{children}</div>
    </div>
  );
}

export default function App() {
  return (
    <div className="flex h-[1336px] w-full flex-col bg-white pt-[11px] font-['Inter',sans-serif] text-[#161a40]">
      <main className="flex h-[1207px] items-start justify-between bg-[#f7fbff] pt-[199px] pr-[149px] pl-[141px]">
        <div className="flex w-[1112px] flex-col items-start">
          <h2 className="ml-[-1px] text-[72px] leading-[82px] font-bold tracking-[-1.400px] whitespace-nowrap">Контакты</h2>
          <p className="mt-[46px] text-[36px] leading-[56px] font-[330] tracking-[-0.87px] whitespace-nowrap text-[#666666]">
            Свяжитесь с нами любым удобным способом. Работаем
          </p>
          <p className="text-[36px] leading-[56px] font-[330] tracking-[-0.73px] whitespace-nowrap text-[#666666]">
            ежедневно и готовы помочь с ремонтом вашей техники.
          </p>
          <h3 className="mt-[68px] text-[40px] leading-[48px] font-semibold tracking-[-0.9px] whitespace-nowrap">
            Как с нами связаться:
          </h3>
          <div className="mt-[52px] flex flex-col gap-8">
            <ContactRow icon={<RiPhoneLine className="size-12 text-[#4f8bf9]" />}>
              <span className="text-[36px] leading-[56px] font-semibold tracking-[-1px] whitespace-nowrap">
                8 (495) 138-39-22
              </span>
              <span className="pt-px text-[32px] leading-[47px] font-[330] tracking-[-0.85px] whitespace-nowrap text-[#666666]">
                Ежедневно с 7:00 до 23:00
              </span>
            </ContactRow>
            <ContactRow icon={<RiMapPinLine className="mb-1 size-12 text-[#4f8bf9]" />}>
              <span className="text-[36px] leading-[56px] font-semibold tracking-[-1.15px] whitespace-nowrap">
                Выезд по Москве и МО
              </span>
              <span className="pt-px text-[32px] leading-[47px] font-[330] tracking-[-1.4px] whitespace-nowrap text-[#666666]">
                До 15 км от МКАД
              </span>
            </ContactRow>
          </div>
          <button className="mt-16 flex h-24 w-[403px] items-center gap-[15px] rounded-2xl bg-[#4f8bf9] pl-[47px] text-white shadow-[0_4px_48px_rgba(79,139,249,0.28)]">
            <RiCustomerServiceLine className="size-[34px]" stroke="currentColor" strokeWidth="0.7" />
            <span className="text-[34px] leading-[48px] font-medium tracking-[-1.25px] whitespace-nowrap">Заказать звонок</span>
          </button>
        </div>
        <MapCard />
      </main>
      <footer className="flex h-[118px] items-center justify-between bg-[#1f2c47] pr-[189px] pl-[181px] font-['Liberation_Sans',Arial,sans-serif] text-2xl whitespace-nowrap text-[#a5a6a9]">
        <span>© 2025 Копиматик | Все права защищены</span>
        <div className="flex gap-8">
          <span>ИП Муллагулов Ришат Фратович</span>
          <span>ИНН 0214006059680</span>
          <span>ОГРНИП 318028000095163</span>
        </div>
        <span>Политика конфиденциальности</span>
      </footer>
    </div>
  );
}
